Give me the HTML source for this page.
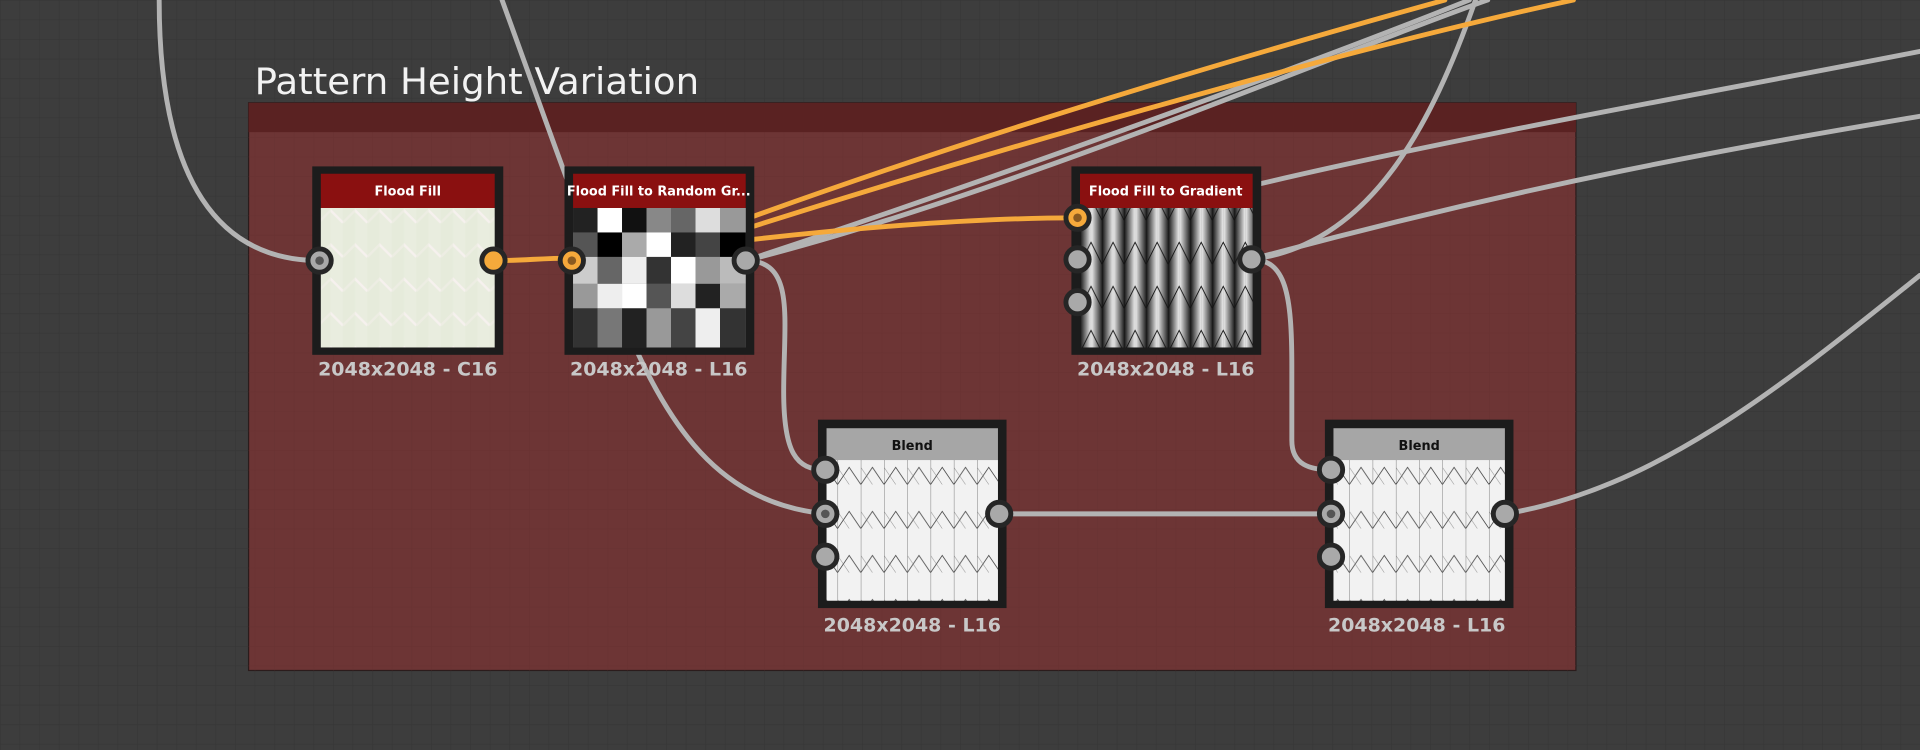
<!DOCTYPE html>
<html><head><meta charset="utf-8"><style>
html,body{margin:0;padding:0;background:#3d3d3d;width:1920px;height:750px;overflow:hidden}
svg{display:block}
</style></head><body>
<svg width="1920" height="750" viewBox="0 0 1568 613" preserveAspectRatio="none" xmlns="http://www.w3.org/2000/svg">
<defs>
<pattern id="grid" width="16" height="16" patternUnits="userSpaceOnUse">
<path d="M16 0H0V16" fill="none" stroke="#363636" stroke-width="1"/>
</pattern>
<pattern id="grid2" width="16" height="16" patternUnits="userSpaceOnUse">
<path d="M16 0H0V16" fill="none" stroke="#663030" stroke-width="1"/>
</pattern>
<pattern id="ff" width="20" height="28" patternUnits="userSpaceOnUse">
<rect width="20" height="28" fill="#e9eddf"/>
<path d="M0 14 L10 4 L20 14" fill="none" stroke="#f6f1ee" stroke-width="2"/>
<rect x="0" y="0" width="10" height="28" fill="#e4e9d8" opacity=".5"/>
</pattern>
<pattern id="bl" width="19" height="36" patternUnits="userSpaceOnUse">
<rect width="19" height="36" fill="#f2f2f2"/>
<path d="M0 0V36" stroke="#555" stroke-width=".6"/>
<path d="M0 36 L9.5 22 L19 36" fill="none" stroke="#333" stroke-width=".6"/>
<path d="M0 22 L9.5 36" fill="none" stroke="#777" stroke-width=".4"/>
</pattern>
<linearGradient id="g1" x1="0" x2="1"><stop offset="0" stop-color="#111"/><stop offset="1" stop-color="#eee"/></linearGradient>
<linearGradient id="g2" x1="1" x2="0"><stop offset="0" stop-color="#222"/><stop offset="1" stop-color="#f4f4f4"/></linearGradient>
<pattern id="gr" width="18" height="36" patternUnits="userSpaceOnUse">
<rect width="9" height="36" fill="url(#g1)"/><rect x="9" width="9" height="36" fill="url(#g2)"/>
<path d="M0 36 L9 18 L18 36" fill="none" stroke="#111" stroke-width=".7"/>
</pattern>
</defs>
<rect width="1568" height="613" fill="#3d3d3d"/>
<rect width="1568" height="613" fill="url(#grid)"/>

<rect x="203" y="84" width="1084" height="464" fill="#6d3535" stroke="#2b1c1c" stroke-width="1"/>
<rect x="203" y="84" width="1084" height="464" fill="url(#grid2)" opacity=".6"/>
<rect x="203" y="84" width="1084" height="24" fill="#5a2222"/>
<text x="208" y="77" font-family="DejaVu Sans, sans-serif" font-size="30" fill="#f2f2f2" textLength="363" lengthAdjust="spacingAndGlyphs">Pattern Height Variation</text>

<g fill="none" stroke="#b3b3b3" stroke-width="4" stroke-linecap="round">
<path d="M130,0 C130,150 180,213 261,213"/>
<path d="M410,0 C450,110 470,170 500,240 C540,340 580,410 674,420"/>
<path d="M609,213 C800,150 1050,60 1200,0"/>
<path d="M609,213 C820,160 1100,40 1215,0"/>
<path d="M609,213 C650,213 640,260 640,320 C640,370 650,384 674,384"/>
<path d="M1030,150 C1200,110 1400,75 1568,42"/>
<path d="M1022,212 C1250,150 1420,120 1568,95"/>
<path d="M1022,212 C1120,200 1170,100 1205,0"/>
<path d="M1022,212 C1050,212 1055,240 1055,300 L1055,360 C1055,380 1070,384 1087,384"/>
<path d="M816,420 L1087,420"/>
<path d="M1229,420 C1350,400 1450,320 1568,225"/>
</g>
<g fill="none" stroke="#f5a93b" stroke-width="4" stroke-linecap="round">
<path d="M403,213 C430,213 440,211 467,211"/>
<path d="M612,178 C800,110 1000,50 1180,0"/>
<path d="M612,186 C820,120 1100,40 1285,0"/>
<path d="M612,196 C700,186 800,178 880,178"/>
</g>

<rect x="255" y="136" width="156" height="154" fill="#1c1c1c"/>
<rect x="262" y="142" width="142" height="28" fill="#8a1010"/>
<rect x="262" y="170" width="142" height="114" fill="url(#ff)"/>
<text x="333" y="160" text-anchor="middle" font-family="DejaVu Sans, sans-serif" font-weight="bold" font-size="10.5" fill="#fff">Flood Fill</text>
<text x="333" y="307" text-anchor="middle" font-family="DejaVu Sans, sans-serif" font-weight="bold" font-size="15.5" fill="#c8c8c8">2048x2048 - C16</text>

<rect x="461" y="136" width="155" height="154" fill="#1c1c1c"/>
<rect x="468" y="142" width="141" height="28" fill="#8a1010"/>
<g>
<rect x="468" y="170" width="141" height="114" fill="#777"/>
<rect x="468" y="170" width="20" height="20" fill="#222"/><rect x="488" y="170" width="20" height="20" fill="#fff"/><rect x="508" y="170" width="20" height="20" fill="#111"/><rect x="528" y="170" width="20" height="20" fill="#888"/><rect x="548" y="170" width="20" height="20" fill="#666"/><rect x="568" y="170" width="20" height="20" fill="#ddd"/><rect x="588" y="170" width="21" height="20" fill="#999"/>
<rect x="468" y="190" width="20" height="20" fill="#555"/><rect x="488" y="190" width="20" height="20" fill="#000"/><rect x="508" y="190" width="20" height="20" fill="#aaa"/><rect x="528" y="190" width="20" height="20" fill="#fff"/><rect x="548" y="190" width="20" height="20" fill="#222"/><rect x="568" y="190" width="20" height="20" fill="#444"/><rect x="588" y="190" width="21" height="20" fill="#000"/>
<rect x="468" y="210" width="20" height="22" fill="#ccc"/><rect x="488" y="210" width="20" height="22" fill="#666"/><rect x="508" y="210" width="20" height="22" fill="#eee"/><rect x="528" y="210" width="20" height="22" fill="#333"/><rect x="548" y="210" width="20" height="22" fill="#fff"/><rect x="568" y="210" width="20" height="22" fill="#999"/><rect x="588" y="210" width="21" height="22" fill="#bbb"/>
<rect x="468" y="232" width="20" height="20" fill="#999"/><rect x="488" y="232" width="20" height="20" fill="#eee"/><rect x="508" y="232" width="20" height="20" fill="#fff"/><rect x="528" y="232" width="20" height="20" fill="#555"/><rect x="548" y="232" width="20" height="20" fill="#ddd"/><rect x="568" y="232" width="20" height="20" fill="#222"/><rect x="588" y="232" width="21" height="20" fill="#aaa"/>
<rect x="468" y="252" width="20" height="32" fill="#333"/><rect x="488" y="252" width="20" height="32" fill="#777"/><rect x="508" y="252" width="20" height="32" fill="#222"/><rect x="528" y="252" width="20" height="32" fill="#999"/><rect x="548" y="252" width="20" height="32" fill="#444"/><rect x="568" y="252" width="20" height="32" fill="#eee"/><rect x="588" y="252" width="21" height="32" fill="#333"/>
</g>
<text x="538" y="160" text-anchor="middle" font-family="DejaVu Sans, sans-serif" font-weight="bold" font-size="10.5" fill="#fff">Flood Fill to Random Gr...</text>
<text x="538" y="307" text-anchor="middle" font-family="DejaVu Sans, sans-serif" font-weight="bold" font-size="15.5" fill="#c8c8c8">2048x2048 - L16</text>

<rect x="875" y="136" width="155" height="154" fill="#1c1c1c"/>
<rect x="882" y="142" width="141" height="28" fill="#8a1010"/>
<rect x="882" y="170" width="141" height="114" fill="url(#gr)"/>
<text x="952" y="160" text-anchor="middle" font-family="DejaVu Sans, sans-serif" font-weight="bold" font-size="10.5" fill="#fff">Flood Fill to Gradient</text>
<text x="952" y="307" text-anchor="middle" font-family="DejaVu Sans, sans-serif" font-weight="bold" font-size="15.5" fill="#c8c8c8">2048x2048 - L16</text>

<rect x="668" y="343" width="154" height="154" fill="#1c1c1c"/>
<rect x="675" y="350" width="140" height="26" fill="#a6a6a6"/>
<rect x="675" y="376" width="140" height="115" fill="url(#bl)"/>
<text x="745" y="368" text-anchor="middle" font-family="DejaVu Sans, sans-serif" font-weight="bold" font-size="10.5" fill="#111">Blend</text>
<text x="745" y="516" text-anchor="middle" font-family="DejaVu Sans, sans-serif" font-weight="bold" font-size="15.5" fill="#c8c8c8">2048x2048 - L16</text>

<rect x="1082" y="343" width="154" height="154" fill="#1c1c1c"/>
<rect x="1089" y="350" width="140" height="26" fill="#a6a6a6"/>
<rect x="1089" y="376" width="140" height="115" fill="url(#bl)"/>
<text x="1159" y="368" text-anchor="middle" font-family="DejaVu Sans, sans-serif" font-weight="bold" font-size="10.5" fill="#111">Blend</text>
<text x="1157" y="516" text-anchor="middle" font-family="DejaVu Sans, sans-serif" font-weight="bold" font-size="15.5" fill="#c8c8c8">2048x2048 - L16</text>

<g stroke="#262626" stroke-width="4" fill="#a9a9a9">
<circle cx="261" cy="213" r="9.5"/>
<circle cx="403" cy="213" r="9.5" fill="#f5a93b"/>
<circle cx="467" cy="213" r="9.5" fill="#f5a93b"/>
<circle cx="609" cy="213" r="9.5"/>
<circle cx="880" cy="178" r="9.5" fill="#f5a93b"/>
<circle cx="880" cy="212" r="9.5"/>
<circle cx="880" cy="247" r="9.5"/>
<circle cx="1022" cy="212" r="9.5"/>
<circle cx="674" cy="384" r="9.5"/>
<circle cx="674" cy="420" r="9.5"/>
<circle cx="674" cy="455" r="9.5"/>
<circle cx="816" cy="420" r="9.5"/>
<circle cx="1087" cy="384" r="9.5"/>
<circle cx="1087" cy="420" r="9.5"/>
<circle cx="1087" cy="455" r="9.5"/>
<circle cx="1229" cy="420" r="9.5"/>
</g>
<g fill="#555">
<circle cx="261" cy="213" r="3.5"/>
<circle cx="674" cy="420" r="3.5"/>
<circle cx="1087" cy="420" r="3.5"/>
</g>
<g fill="#8a5a20">
<circle cx="467" cy="213" r="3.5"/>
<circle cx="880" cy="178" r="3.5"/>
</g>
</svg>
</body></html>
